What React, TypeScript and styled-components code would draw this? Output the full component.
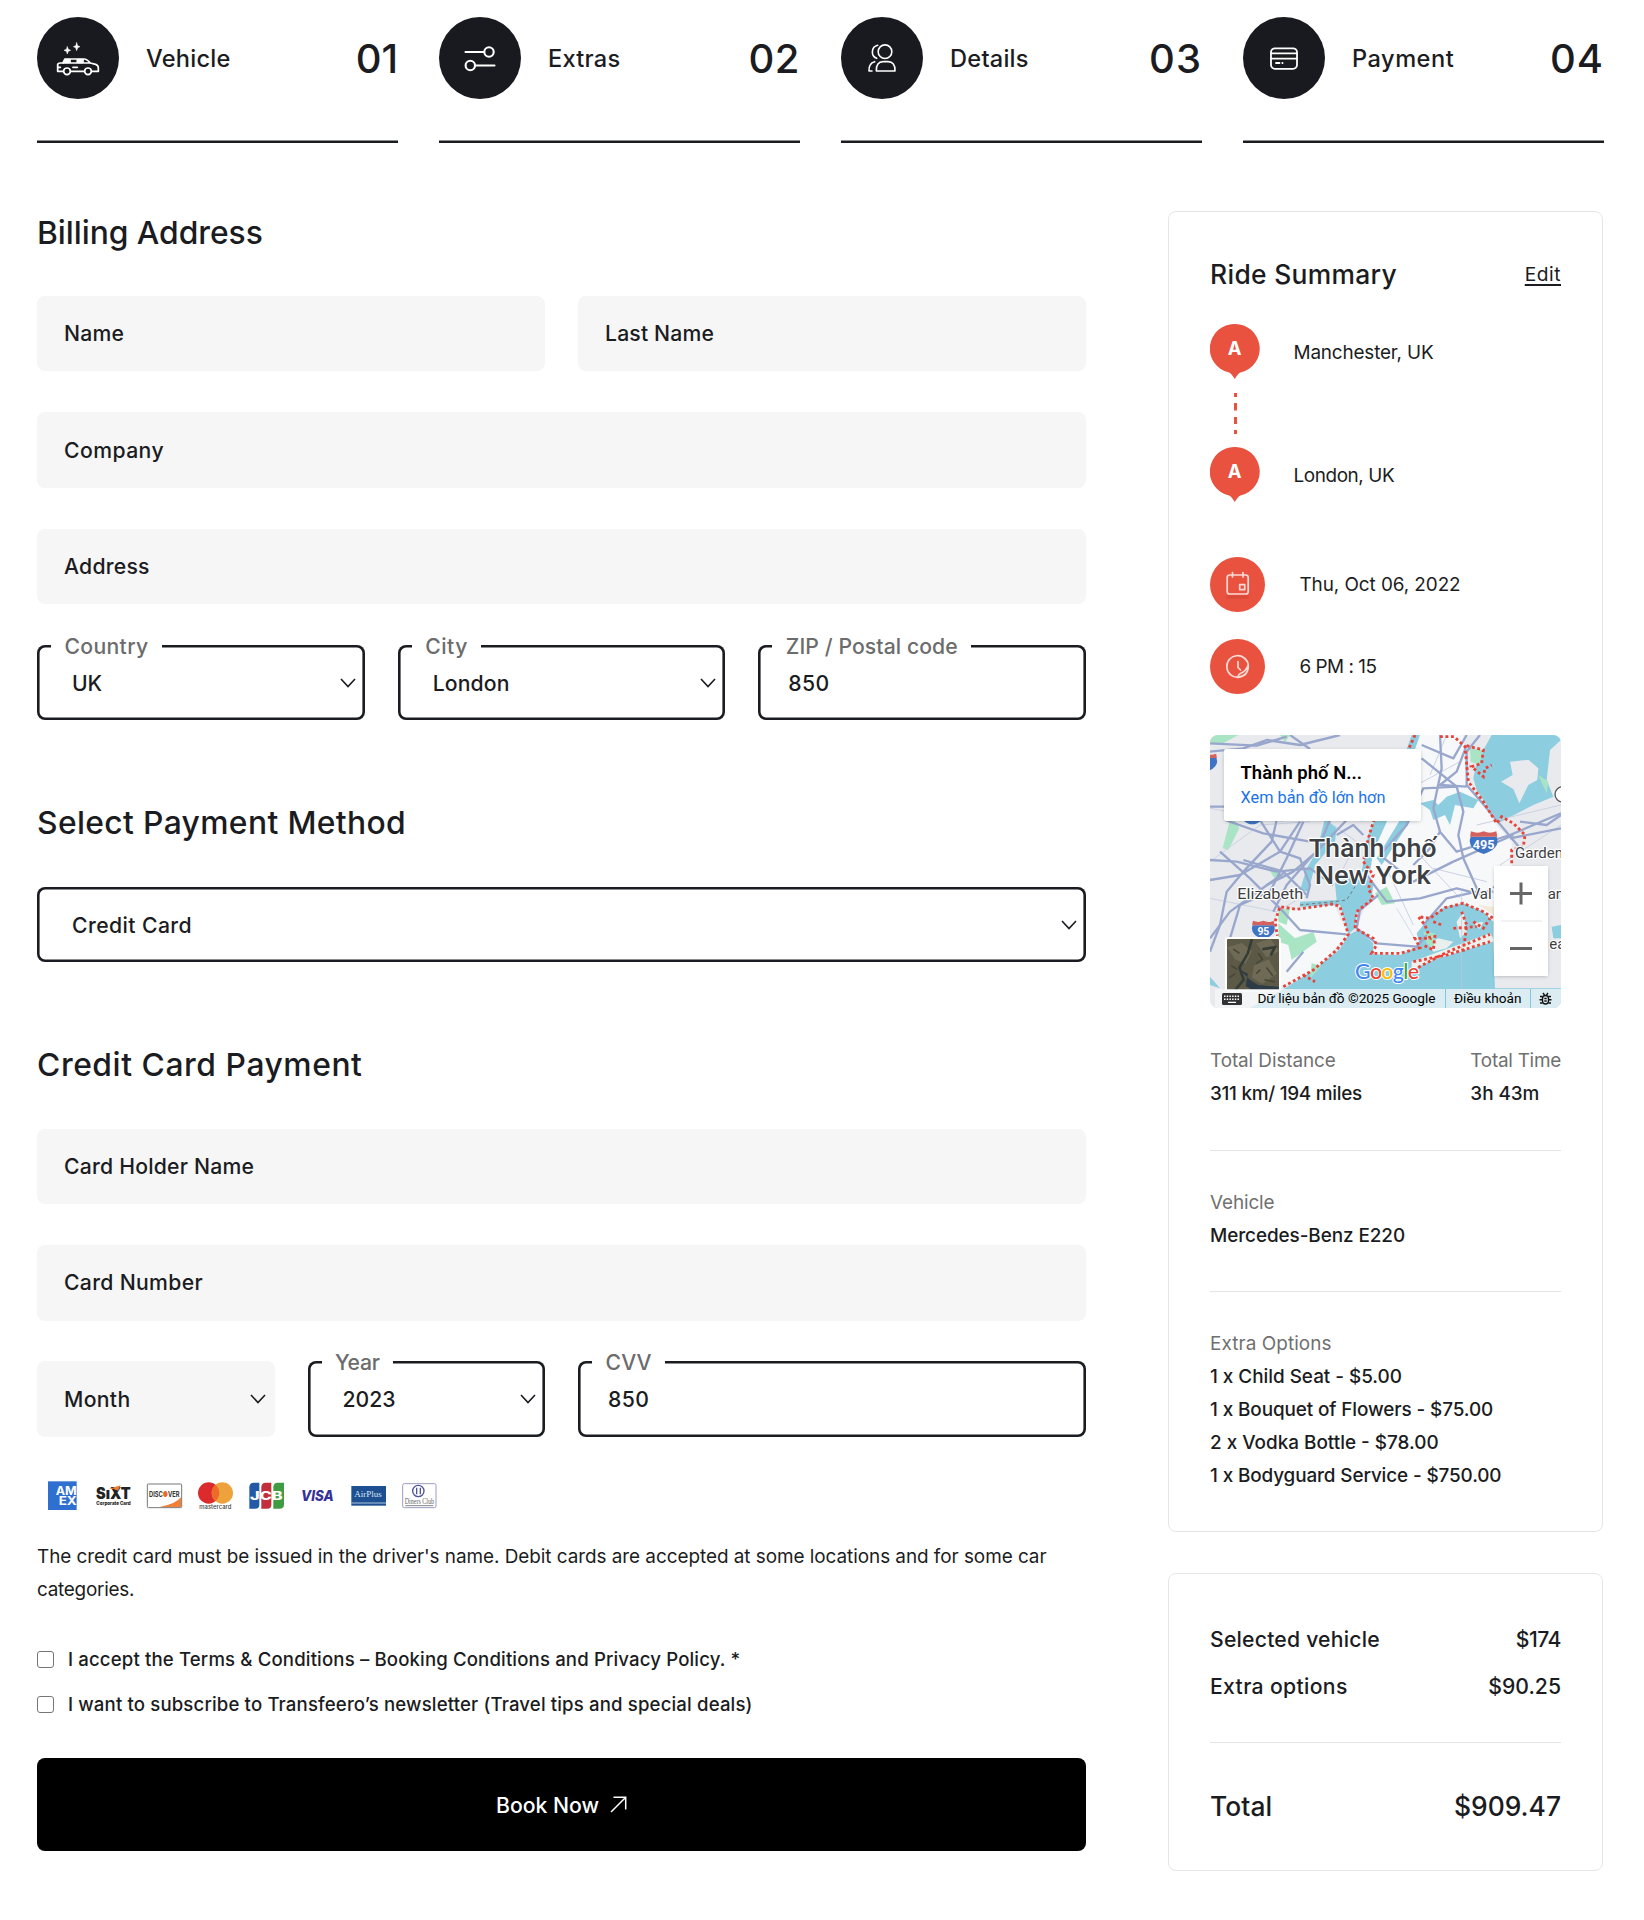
import React from "react";
import styled, { createGlobalStyle, css } from "styled-components";

const INK = "#1b1c21";
const RED = "#e8523f";

const Global = createGlobalStyle`
  * { box-sizing: border-box; }
  body { margin: 0; background: #fff; color: ${INK}; font-family: Inter, "Liberation Sans", sans-serif; -webkit-font-smoothing: antialiased; }
`;

const Txt = styled.span<{ $t?: number }>`
  letter-spacing: ${(p) => p.$t ?? 0}px;
  white-space: nowrap;
`;
const T = ({ t, children }: { t?: number; children: React.ReactNode }) => <Txt $t={t}>{children}</Txt>;

const Page = styled.div`
  width: 1644px;
  height: 1920px;
  padding: 17px 40px 0 37px;
  overflow: hidden;
`;
const Steps = styled.nav`
  display: grid;
  grid-template-columns: repeat(4, 1fr);
  gap: 41px;
`;
const StepBox = styled.div`
  display: flex;
  align-items: center;
  height: 126px;
  padding-bottom: 44px;
  box-shadow: inset 0 -2.6px 0 ${INK};
`;
const StepIcon = styled.svg`
  width: 82px;
  height: 82px;
  border-radius: 50%;
  background: #191a1f;
  fill: none;
  stroke: #fff;
  stroke-linecap: round;
  stroke-linejoin: round;
`;
const StepName = styled.div`
  flex: 1;
  padding-left: 27px;
  font-size: 23.6px;
  font-weight: 500;
`;
const StepNo = styled.div`
  font-size: 40px;
  font-weight: 500;
`;
const Body = styled.main`
  display: grid;
  grid-template-columns: 1049px 435px;
  justify-content: space-between;
  margin: 68px 1px 0 0;
`;
const Heading = styled.h2<{ $top?: number }>`
  margin: ${(p) => p.$top ?? 0}px 0 42.6px;
  height: 42px;
  line-height: 42px;
  font-size: 31.8px;
  font-weight: 500;
`;
const Rows = styled.div`
  display: flex;
  flex-direction: column;
  gap: 40.9px;
`;
const Row = styled.div<{ $cols: string }>`
  display: grid;
  grid-template-columns: ${(p) => p.$cols};
  gap: 33px;
`;
const FieldBox = styled.div<{ $active?: boolean; $select?: boolean }>`
  position: relative;
  display: flex;
  align-items: center;
  justify-content: space-between;
  height: 75.4px;
  border-radius: 8px;
  font-size: 21.2px;
  font-weight: 500;
  padding: 0 8px 1px 27px;
  background: #f6f6f6;
  ${(p) => p.$active && css`
    background: #fff;
    box-shadow: inset 0 0 0 2.6px ${INK};
    padding: 0 8px 0 ${p.$select ? 35 : 30}px;
  `}
`;
const FloatLabel = styled.label`
  position: absolute;
  left: 14px;
  top: -13px;
  height: 28px;
  line-height: 28px;
  padding: 0 13.5px;
  background: #fff;
  color: #6c6c6c;
`;
const Chevron = () => (
  <svg width="18" height="12" viewBox="0 0 18 12" fill="none" stroke={INK} strokeWidth="1.6">
    <path d="M2 2 9 9.6 16 2" />
  </svg>
);

type FieldProps = { text: string; t?: number; label?: string; lt?: number; select?: boolean; active?: boolean };
const Field = ({ text, t, label, lt, select, active }: FieldProps) => (
  <FieldBox $active={active || !!label} $select={select}>
    {label && <FloatLabel><T t={lt}>{label}</T></FloatLabel>}
    <T t={t}>{text}</T>
    {select && <Chevron />}
  </FieldBox>
);

const Brands = styled.div`
  display: flex;
  margin-top: 41.5px;
  height: 35px;
`;
const Brand = styled.svg`
  width: 51px;
  height: 35px;
  font-family: Inter, sans-serif;
`;
const Note = styled.p`
  margin: 27px 0 0;
  font-size: 18.9px;
  line-height: 33px;
`;
const Line = styled.span`
  display: block;
`;
const Check = styled.label`
  display: flex;
  align-items: center;
  gap: 14px;
  height: 45px;
  font-size: 18.6px;
  font-weight: 500;
`;
const Checks = styled.div`
  margin-top: 30.5px;
`;
const Tick = styled.input`
  appearance: none;
  width: 17px;
  height: 17px;
  margin: 0;
  border: 1.4px solid #767676;
  border-radius: 3px;
  background: #fff;
`;
const Submit = styled.button`
  display: flex;
  align-items: center;
  justify-content: center;
  gap: 11px;
  width: 100%;
  height: 93px;
  margin-top: 31.5px;
  border: 0;
  border-radius: 8px;
  background: #000;
  color: #fff;
  font: 500 21.2px Inter, sans-serif;
`;

const Aside = styled.aside`
  display: flex;
  flex-direction: column;
  gap: 41px;
`;
const Card = styled.section<{ $pad: string }>`
  border: 1px solid #e6e6e6;
  border-radius: 8px;
  padding: ${(p) => p.$pad};
`;
const Between = styled.div<{ $h: number; $size: number }>`
  display: flex;
  justify-content: space-between;
  align-items: center;
  height: ${(p) => p.$h}px;
  font-size: ${(p) => p.$size}px;
  font-weight: 500;
`;
const EditLink = styled.a`
  font-size: 19.2px;
  font-weight: 400;
  text-decoration: underline;
  text-decoration-thickness: 1.5px;
  text-underline-offset: 2.5px;
`;
const Route = styled.div`
  padding-top: 23px;
`;
const Place = styled.div`
  display: flex;
  align-items: center;
  gap: 34px;
  height: 55px;
  font-size: 18.9px;
`;
const PlaceName = styled.span`
  padding-top: 1px;
`;
const Pin = styled.svg`
  width: 49.5px;
  height: 55px;
`;
const Dash = styled.svg`
  display: block;
  width: 3px;
  height: 41px;
  margin: 14px 0 13px 23.7px;
`;
const When = styled(Place)<{ $top: number }>`
  margin-top: ${(p) => p.$top}px;
  gap: 34.5px;
`;
const Disc = styled.svg`
  width: 55px;
  height: 55px;
  border-radius: 50%;
  background: ${RED};
  fill: none;
  stroke: #fddad5;
  stroke-linecap: round;
  stroke-linejoin: round;
`;
const MapBox = styled.div`
  position: relative;
  height: 273px;
  margin-top: 41px;
  border-radius: 8px;
  overflow: hidden;
  background: #e8eaed;
  font-family: Roboto, sans-serif;
`;
const MapArt = styled.svg`
  display: block;
  width: 100%;
  height: 273px;
`;
const Popup = styled.div`
  position: absolute;
  left: 14px;
  top: 14px;
  width: 197px;
  height: 72px;
  padding: 12px 16.5px;
  background: #fff;
  border-radius: 2px;
  box-shadow: 0 1px 4px -1px rgba(0, 0, 0, 0.3);
  font-size: 16.3px;
  line-height: 24.5px;
  color: #1a73e8;
`;
const PopupTitle = styled.div`
  font-size: 18.4px;
  font-weight: 600;
  color: #000;
`;
const Zoom = styled.div`
  position: absolute;
  left: 284px;
  top: 131px;
  width: 54px;
  height: 110px;
  background: #fff;
  box-shadow: 0 1px 4px -1px rgba(0, 0, 0, 0.3);
`;
const Thumb = styled.div`
  position: absolute;
  left: 14.5px;
  top: 202px;
  width: 56px;
  height: 55px;
  border: 2px solid #fff;
  border-radius: 3px;
  overflow: hidden;
`;
const MapFoot = styled.div`
  position: absolute;
  left: 5px;
  right: 0;
  bottom: 0;
  height: 19px;
  display: flex;
  align-items: center;
  background: rgba(245, 247, 248, 0.75);
  color: #000;
  font-size: 13.6px;
  line-height: 19px;
`;
const FootCell = styled.span<{ $w: number; $line?: boolean }>`
  width: ${(p) => p.$w}px;
  height: 19px;
  display: flex;
  align-items: center;
  justify-content: center;
  border-right: ${(p) => (p.$line ? "1px solid #7fc8da" : "0")};
`;
const Facts = styled.div<{ $pad: string; $line?: boolean }>`
  display: flex;
  justify-content: space-between;
  padding: ${(p) => p.$pad};
  border-top: ${(p) => (p.$line ? "1px solid #e4e4e4" : "0")};
`;
const Dim = styled.div`
  font-size: 18.9px;
  line-height: 33px;
  color: #707070;
`;
const Strong = styled.div`
  font-size: 18.9px;
  line-height: 33px;
  font-weight: 500;
`;
const Rule = styled.div`
  height: 1px;
  background: #e4e4e4;
  margin: 33px 0;
`;

const VehicleArt = () => (
  <StepIcon viewBox="0 0 246 246" strokeWidth="5.2">
    <path d="M78 163H62V143Q62 138 70 138H160L176 142Q184 145 184 153V163H165M141 163H102M78 138 84 126H143Q150 127 160 138M99 126V137M121 126V137M138 127V137M108 151H121M62 151H70" />
    <path d="M84 126H98V138H78ZM122 126H137V138H122Z" fill="#fff" strokeWidth="1" />
    <circle cx="90" cy="163" r="10" /><circle cx="153" cy="163" r="10" />
    <path d="M91 89 94 97 101 100 94 103 91 111 88 103 81 100 88 97ZM119 77 122 86 129 89 122 92 119 101 116 92 109 89 116 86Z" fill="#fff" strokeWidth="1.5" />
  </StepIcon>
);
const ExtrasArt = () => (
  <StepIcon viewBox="0 0 82 82" strokeWidth="2.1">
    <path d="M26.500 35H45M36.500 48.500H55.500" /><circle cx="50" cy="35" r="4.700" /><circle cx="31.300" cy="48.500" r="4.700" />
  </StepIcon>
);
const DetailsArt = () => (
  <StepIcon viewBox="0 0 246 246" strokeWidth="4.800">
    <circle cx="132" cy="104" r="20.500" />
    <path d="M110 85A20.500 20.500 0 0 0 107 124M106 162H162C163 144 155 134 141 134H126C113 134 105 144 106 162ZM93 162H84C83 148 90 137 101 134" />
  </StepIcon>
);
const PaymentArt = () => (
  <StepIcon viewBox="0 0 82 82" strokeWidth="1.800">
    <rect x="28" y="31.300" width="26" height="20.500" rx="4" />
    <path d="M28 36.400H54M28 41.600H54M33 46H36.500M39.300 46H39.600" />
  </StepIcon>
);
const steps = [
  { name: "Vehicle", no: "01", t: 0.24, nt: -0.1, art: <VehicleArt /> },
  { name: "Extras", no: "02", t: 0.25, nt: 0.5, art: <ExtrasArt /> },
  { name: "Details", no: "03", t: 0.25, nt: 1, art: <DetailsArt /> },
  { name: "Payment", no: "04", t: 0.5, nt: 1, art: <PaymentArt /> },
];

const CardBrands = () => (
  <Brands>
    <Brand viewBox="0 0 153 105">
      <rect x="33" y="10" width="86" height="86" fill="#2e6fd0" />
      <g fill="#fff" fontWeight="700">
        <text x="56" y="51" fontSize="34" textLength="63" lengthAdjust="spacingAndGlyphs">AM</text>
        <text x="65" y="82" fontSize="34" textLength="54" lengthAdjust="spacingAndGlyphs">EX</text>
      </g>
    </Brand>
    <Brand viewBox="0 0 153 105">
      <text x="24" y="64" fontSize="46" fontWeight="900" textLength="104" lengthAdjust="spacingAndGlyphs" fill="#222">SıXT</text>
      <path d="M60 34 98 22 90 38 76 32Z" fill="#f07a28" />
      <text x="25" y="82" fontSize="15" fontWeight="800" textLength="103" lengthAdjust="spacingAndGlyphs" fill="#222">Corporate Card</text>
    </Brand>
    <Brand viewBox="0 0 153 105">
      <rect x="25" y="18" width="103" height="71" rx="3" fill="#fff" stroke="#777" strokeWidth="3" />
      <path d="M62 87Q110 78 126 58V87Z" fill="#ee8137" />
      <text x="30" y="58" fontSize="22" fontWeight="700" textLength="92" lengthAdjust="spacingAndGlyphs" fill="#333">DISC<tspan fill="#ee6a20">●</tspan>VER</text>
    </Brand>
    <Brand viewBox="0 0 153 105">
      <circle cx="56" cy="45" r="32" fill="#dc2b2d" /><circle cx="97" cy="45" r="32" fill="#eda23c" />
      <path d="M76.500 20.500A32 32 0 0 1 76.500 69.500A32 32 0 0 1 76.500 20.500" fill="#ee6a28" />
      <text x="28" y="93" fontSize="18" fontWeight="500" textLength="96" lengthAdjust="spacingAndGlyphs" fill="#444">mastercard</text>
    </Brand>
    <Brand viewBox="0 0 153 105">
      <path d="M38 14H55V80Q55 92 43 92H25V28Q25 14 38 14Z" fill="#2359a5" />
      <path d="M74 14H91V80Q91 92 79 92H61V28Q61 14 74 14Z" fill="#c22e3c" />
      <path d="M110 14H129V80Q129 92 115 92H97V28Q97 14 110 14Z" fill="#3f9c42" />
      <text x="27" y="66" fontSize="35" fontWeight="800" textLength="98" lengthAdjust="spacingAndGlyphs" fill="#fff">JCB</text>
    </Brand>
    <Brand viewBox="0 0 153 105">
      <text x="27" y="68" fontSize="43" fontWeight="800" fontStyle="italic" textLength="98" lengthAdjust="spacingAndGlyphs" fill="#36309b">VISA</text>
    </Brand>
    <Brand viewBox="0 0 153 105">
      <rect x="25" y="24" width="104" height="59" fill="#1d4f91" />
      <path d="M25 75H129" stroke="#cfe0f2" strokeWidth="2.500" />
      <text x="34" y="57" fontSize="27" fontFamily="Liberation Serif, serif" textLength="82" lengthAdjust="spacingAndGlyphs" fill="#dbe7f5">AirPlus</text>
    </Brand>
    <Brand viewBox="0 0 153 105">
      <rect x="26" y="17" width="100" height="72" rx="5" fill="#fff" stroke="#9c9cc0" strokeWidth="3" />
      <circle cx="73" cy="39" r="17" fill="#fff" stroke="#50549b" strokeWidth="4" />
      <path d="M68 29V49M79 29V49" stroke="#50549b" strokeWidth="4" />
      <text x="32" y="78" fontSize="24" fontFamily="Liberation Serif, serif" textLength="88" lengthAdjust="spacingAndGlyphs" fill="#666">Diners Club</text>
      <path d="M34 83H118" stroke="#888" strokeWidth="3" />
    </Brand>
  </Brands>
);

const PinA = () => (
  <Pin viewBox="0 0 49.500 55">
    <path d="M24.750 0A24.600 24.600 0 0 1 30.500 48.600Q28.600 49.100 24.750 55Q20.900 49.100 19 48.600A24.600 24.600 0 0 1 24.750 0Z" fill={RED} />
    <text x="24.750" y="30.500" textAnchor="middle" fontSize="18.500" fontWeight="700" fill="#fff">A</text>
  </Pin>
);
const CalendarDisc = () => (
  <Disc viewBox="0 0 55 55" strokeWidth="1.700">
    <path d="M18 40H37" stroke="#d04636" strokeWidth="3.500" opacity="0.6" />
    <rect x="17.200" y="18" width="21" height="19" rx="2.500" />
    <path d="M22.500 15.500V20M33 15.500V20" /><rect x="29.700" y="27.600" width="5" height="5" />
  </Disc>
);
const ClockDisc = () => (
  <Disc viewBox="0 0 55 55" strokeWidth="1.700">
    <path d="M38.300 26A10.800 10.800 0 1 0 28 38.300C35 37.500 38.500 33 38.300 26ZM38 26.500C36.500 29.500 36 31.500 32.500 33.500 29.500 34.500 28 36 28 38.300" />
    <path d="M28 22.500V28.500L30.500 31" />
  </Disc>
);

const Shield = ({ x, y, n, s = 1 }: { x: number; y: number; n?: string; s?: number }) => (
  <g transform={`translate(${x} ${y}) scale(${s})`}>
    <path d="M-39 -20H39Q52 14 0 32Q-52 14 -39 -20Z" fill="#3f74c4" />
    <path d="M-38 -36Q-18 -28 0 -36Q18 -28 38 -36L41 -20H-41Z" fill="#d4615d" />
    {n && <text y="16" textAnchor="middle" fontSize="38" fontWeight="700" fill="#fff">{n}</text>}
  </g>
);

const CityMap = () => (
  <MapArt viewBox="30 30 1053 819" preserveAspectRatio="none">
    <rect x="30" y="30" width="1053" height="819" fill="#e8eaed" />
    <path d="M650 30H790L800 160 830 210 890 300 935 350V420L880 560V640L640 700H520L470 610 520 480 500 400 560 290Z" fill="#f7f8f9" />
    <path d="M230 560 400 535 445 630 340 740 240 790 225 640Z" fill="#f7f8f9" />
    <g fill="#8ccddf">
      <path d="M875 30H1083V45L1050 75 1040 165 1060 215 1000 240 900 292 870 255 830 195 820 160 830 110 850 75Z" />
      <path d="M635 30H660L625 130 560 290 520 380 510 440H485L505 330 525 285 600 130Z" />
      <path d="M600 285H632L590 350 545 420 530 400Z" />
      <path d="M660 235 700 225 715 240 740 215 780 200 835 225 820 250 765 240 750 300 735 270 700 285 690 255Z" />
      <path d="M375 280 410 310 405 350 345 420 325 500 300 495 320 430 350 380Z" />
      <path d="M405 475 480 440 520 480 515 520 470 560 465 610 445 628 420 540 300 545 300 530 410 525Z" />
      <path d="M445 630 475 615 520 655V688L600 690 660 660 650 625 690 575 735 545 790 535 850 560 880 590V650L885 790H1083V849H150L255 790 340 735 420 672Z" />
      <path d="M1083 600 1055 605 1060 640H1083Z" />
      <path d="M30 755 60 790 30 780Z" />
    </g>
    <path d="M930 110 985 104 1015 130 1012 165 985 180 958 235 940 192 903 170 938 150Z" fill="#e8eaed" />
    <path d="M635 710 870 625 885 648 700 705 635 735Z" fill="#eef0ec" />
    <path d="M685 655 715 640 760 650 740 670 700 680ZM770 590 790 560 800 620 780 640ZM820 595 850 590 840 612Z" fill="#e9efec" />
    <g fill="#a9e5c5">
      <path d="M30 30H115L60 60 30 55ZM95 265 118 310 85 375 68 370ZM560 485 585 535 545 540 525 505ZM810 70 850 75 838 120 812 110ZM1015 150 1045 170 1040 205ZM235 555 270 550 260 600 235 590ZM335 715 365 722 330 760ZM670 620 705 625 700 670 680 655Z" />
      <path d="M235 595 285 640 340 620 350 650 275 705 265 660 235 650ZM240 30H270L255 52ZM205 430 240 440 225 462Z" />
    </g>
    <g fill="none" stroke="#cbd2e4" strokeWidth="3">
      <path d="M30 410 180 300 330 290M30 520 230 560 300 520M560 430 640 600M700 430 860 470M640 370 780 520M830 300 1083 240M900 420 1083 300M650 180 780 110M30 250 250 290M400 300 470 350 420 450M740 30 690 150" />
    </g>
    <g fill="none" stroke="#99a7cd" strokeWidth="7" strokeLinejoin="round">
      <path d="M30 80 130 70 200 45 300 60 420 30M30 55 170 62 260 35M270 30 330 72M30 245H72M180 285 240 380 300 400 330 480 320 520" />
      <path d="M230 285 215 350 130 440 80 500 60 600 30 680M30 465 120 450 240 380 300 290M30 405 110 410 230 440 330 430 400 480" />
      <path d="M75 285 190 325 330 350M310 290 260 400 210 500 120 540 90 640M30 640 90 560 250 445M130 405 250 440 320 510" />
      <path d="M60 380 150 460 250 560 300 615 440 628M390 285 350 380 280 440 200 480M440 285 330 400 260 480 220 560M260 740 310 680M410 330 460 300 490 330" />
      <path d="M665 100 770 185 790 260 775 330 790 400 835 500M770 185 670 190 620 300 540 390M720 30 725 130 700 250 720 320 770 380 930 330 1083 265" />
      <path d="M665 60 760 100 800 30M800 60 770 140 720 180 800 185M840 30 800 80V180L860 250 960 370M535 510 480 555 470 610 530 655 650 665 680 630" />
      <path d="M500 450 560 530 660 520 770 490 850 510M540 390 640 470 760 410 940 330M720 320 690 370 640 420M670 600 740 520 830 500 880 500M930 340 1083 310M960 290 1040 300 1083 270M920 440 880 490" />
    </g>
    <g fill="none" stroke="#b9cbe0" strokeWidth="2"><path d="M785 500V800M590 550 650 650" /></g>
    <path d="M300 540 400 530 440 525 465 485" fill="none" stroke="#777" strokeWidth="3" strokeDasharray="10 8" />
    <g fill="none" stroke="#e8433a" strokeWidth="8.500" strokeDasharray="8.500 8">
      <path d="M645 30 600 130 520 290 505 340 490 410 520 450 505 490 520 520 470 560 465 610 520 640 530 660 515 685 600 685 660 668 645 640 690 640 675 600 655 575 690 580 735 548 790 535 850 560 880 580" />
      <path d="M720 35H762L795 65 805 170 850 230 890 295 905 275 940 295 975 330 970 365 935 375V420" />
      <path d="M250 785 340 735 410 675 445 628 420 545 400 537 290 553 240 545 225 590 232 632M310 750 345 770" />
      <path d="M640 710 740 690 870 650M640 735 740 682 870 628M800 62 850 75 845 115 815 125 850 155 855 130 875 120M785 560 800 600 790 680M820 590 850 610 870 580M700 590 725 600M760 610 830 605M705 630 700 675 670 660" />
    </g>
    <path d="M875 545 882 545V570L835 540Z" fill="#f3ead8" />
    <Shield x={851} y={355} n="495" />
    <Shield x={190} y={617} n="95" s={0.82} />
    <Shield x={18} y={115} s={0.8} />
    <path d="M128 284H186Q157 312 128 284Z" fill="#3f74c4" />
    <circle cx="1088" cy="208" r="23" fill="#fff" stroke="#555" strokeWidth="4" />
    <g fill="#3c4043" stroke="#fff" strokeWidth="7" strokeLinejoin="round" paintOrder="stroke" fontFamily="Roboto, sans-serif">
      <text x="326" y="396" fontSize="79" fontWeight="500" textLength="384" lengthAdjust="spacingAndGlyphs">Thành phố</text>
      <text x="344" y="478" fontSize="79" fontWeight="500" textLength="348" lengthAdjust="spacingAndGlyphs">New York</text>
      <text x="112" y="522" fontSize="46" textLength="198" lengthAdjust="spacingAndGlyphs">Elizabeth</text>
      <text x="945" y="399" fontSize="45">Garden</text>
      <text x="812" y="522" fontSize="45">Val</text>
      <text x="1043" y="522" fontSize="45">am</text>
      <text x="1048" y="671" fontSize="45">ea</text>
    </g>
    <text x="465" y="762" fontSize="64" fontWeight="500" textLength="192" stroke="#fff" strokeWidth="6" paintOrder="stroke" fontFamily="Lato, sans-serif">
      <tspan fill="#4285f4">G</tspan><tspan fill="#ea4335">o</tspan><tspan fill="#fbbc05">o</tspan><tspan fill="#4285f4">g</tspan><tspan fill="#34a853">l</tspan><tspan fill="#ea4335">e</tspan>
    </text>
  </MapArt>
);

const RideMap = () => (
  <MapBox>
    <CityMap />
    <Popup>
      <PopupTitle><T t={0.05}>Thành phố N...</T></PopupTitle>
      <T t={0.02}>Xem bản đồ lớn hơn</T>
    </Popup>
    <Zoom>
      <svg width="54" height="110" fill="none" stroke="#666" strokeWidth="3">
        <path d="M16 27.500H38M27 16.500V38.500M16 82.500H38" /><path d="M7 55H48" stroke="#e6e6e6" strokeWidth="1.200" />
      </svg>
    </Zoom>
    <Thumb>
      <svg width="52" height="51" viewBox="0 0 50 50" preserveAspectRatio="none">
        <rect width="50" height="50" fill="#5c5947" />
        <path d="M0 8 14 4 24 12 18 24 8 20ZM28 4 42 0 50 12 38 18ZM26 26 40 20 48 34 34 44 24 38Z" fill="#6e6a55" />
        <path d="M24 0 20 14 12 28 16 40 8 50M34 10 46 8 42 16" stroke="#343d35" strokeWidth="2.500" fill="none" />
        <path d="M12 30 20 34 18 46 24 50H50V47L30 45 22 40Z" fill="#2c3b46" />
        <path d="M4 26 10 30M30 14 34 20 28 24M38 28 44 36M6 10 12 14M28 34 32 30M2 38 8 34M36 40 46 42" stroke="#454634" strokeWidth="1.500" fill="none" />
      </svg>
    </Thumb>
    <MapFoot>
      <FootCell $w={33}>
        <svg width="20" height="12" viewBox="0 0 20 12">
          <rect width="20" height="12" rx="1.500" fill="#333" />
          <path d="M2 3.300H18M2 6.200H18" stroke="#fff" strokeWidth="1.500" strokeDasharray="1.500 1.200" /><path d="M6 9.300H14" stroke="#fff" strokeWidth="1.300" />
        </svg>
      </FootCell>
      <FootCell $w={198} $line><T>Dữ liệu bản đồ ©2025 Google</T></FootCell>
      <FootCell $w={84.5} $line><T>Điều khoản</T></FootCell>
      <FootCell $w={30}>
        <svg width="13" height="14" viewBox="0 0 13 14" fill="none" stroke="#111" strokeWidth="1.400">
          <rect x="3.500" y="3.500" width="6" height="8.500" rx="3" /><path d="M1 4.500H3.500M9.500 4.500H12M.5 7.700H3.500M9.500 7.700H12.500M1 11H3.500M9.500 11H12M4 1 5.500 3M9 1 7.500 3M5.300 6.500H7.700M5.300 9H7.700" />
        </svg>
      </FootCell>
    </MapFoot>
  </MapBox>
);

export default function App() {
  return (
    <Page>
      <Global />
      <Steps>
        {steps.map((s) => (
          <StepBox key={s.no}>
            {s.art}
            <StepName><T t={s.t}>{s.name}</T></StepName>
            <StepNo><T t={s.nt}>{s.no}</T></StepNo>
          </StepBox>
        ))}
      </Steps>
      <Body>
        <div>
          <Heading $top={0.5}><T t={-0.05}>Billing Address</T></Heading>
          <Rows>
            <Row $cols="1fr 1fr"><Field text="Name" t={0.17} /><Field text="Last Name" t={0.16} /></Row>
            <Field text="Company" t={0.42} />
            <Field text="Address" t={0.22} />
            <Row $cols="1fr 1fr 1fr">
              <Field label="Country" lt={0.32} text="UK" t={-0.3} select />
              <Field label="City" lt={0.5} text="London" t={0.14} select />
              <Field label="ZIP / Postal code" lt={0.08} text="850" t={0.4} />
            </Row>
          </Rows>
          <Heading $top={82}><T t={0.36}>Select Payment Method</T></Heading>
          <Field text="Credit Card" t={0.41} active select />
          <Heading $top={82}><T t={0.56}>Credit Card Payment</T></Heading>
          <Rows>
            <Field text="Card Holder Name" t={0.21} />
            <Field text="Card Number" t={0.32} />
            <Row $cols="237.5px 237.5px 1fr">
              <Field text="Month" t={0.33} select />
              <Field label="Year" lt={-0.3} text="2023" t={-0.05} select />
              <Field label="CVV" lt={0.1} text="850" t={0.4} />
            </Row>
          </Rows>
          <CardBrands />
          <Note>
            <Line><T t={-0.035}>The credit card must be issued in the driver's name. Debit cards are accepted at some locations and for some car</T></Line>
            <Line><T t={-0.25}>categories.</T></Line>
          </Note>
          <Checks>
            <Check><Tick type="checkbox" /><T t={0.14}>I accept the Terms &amp; Conditions – Booking Conditions and Privacy Policy. *</T></Check>
            <Check><Tick type="checkbox" /><T t={0.145}>I want to subscribe to Transfeero’s newsletter (Travel tips and special deals)</T></Check>
          </Checks>
          <Submit>
            <T>Book Now</T>
            <svg width="17" height="17" viewBox="0 0 17 17" fill="none" stroke="#fff" strokeWidth="1.500"><path d="M1 16 15.500 1.500M3.500 1.300H15.700V13.500" /></svg>
          </Submit>
        </div>
        <Aside>
          <Card $pad="35px 41px 0">
            <Between $h={54} $size={26.4}>
              <T t={0.32}>Ride Summary</T><EditLink><T t={0.5}>Edit</T></EditLink>
            </Between>
            <Route>
              <Place><PinA /><PlaceName><T t={-0.16}>Manchester, UK</T></PlaceName></Place>
              <Dash viewBox="0 0 3 41"><path d="M1.500 0V4M1.500 10V17.500M1.500 24V31M1.500 37V41" stroke={RED} strokeWidth="3" /></Dash>
              <Place><PinA /><PlaceName><T t={-0.4}>London, UK</T></PlaceName></Place>
              <When $top={55}><CalendarDisc /><T t={-0.07}>Thu, Oct 06, 2022</T></When>
              <When $top={27}><ClockDisc /><T t={-0.5}>6 PM : 15</T></When>
            </Route>
            <RideMap />
            <Facts $pad="36px 0 40px">
              <div><Dim><T t={-0.08}>Total Distance</T></Dim><Strong><T t={-0.28}>311 km/ 194 miles</T></Strong></div>
              <div><Dim><T t={-0.25}>Total Time</T></Dim><Strong><T t={-0.05}>3h 43m</T></Strong></div>
            </Facts>
            <Facts $line $pad="35px 0 39px">
              <div><Dim><T t={-0.1}>Vehicle</T></Dim><Strong><T t={-0.07}>Mercedes-Benz E220</T></Strong></div>
            </Facts>
            <Facts $line $pad="35px 0 39px">
              <div>
                <Dim><T t={0.08}>Extra Options</T></Dim>
                <Strong><T t={-0.02}>1 x Child Seat - $5.00</T></Strong>
                <Strong><T t={-0.1}>1 x Bouquet of Flowers - $75.00</T></Strong>
                <Strong><T>2 x Vodka Bottle - $78.00</T></Strong>
                <Strong><T t={-0.12}>1 x Bodyguard Service - $750.00</T></Strong>
              </div>
            </Facts>
          </Card>
          <Card $pad="41px 41px 34px">
            <Between $h={47} $size={21.2}><T t={0.2}>Selected vehicle</T><T t={-0.5}>$174</T></Between>
            <Between $h={47} $size={21.2}><T t={0.33}>Extra options</T><T>$90.25</T></Between>
            <Rule />
            <Between $h={60} $size={26.4}><T t={0.1}>Total</T><T>$909.47</T></Between>
          </Card>
        </Aside>
      </Body>
    </Page>
  );
}
